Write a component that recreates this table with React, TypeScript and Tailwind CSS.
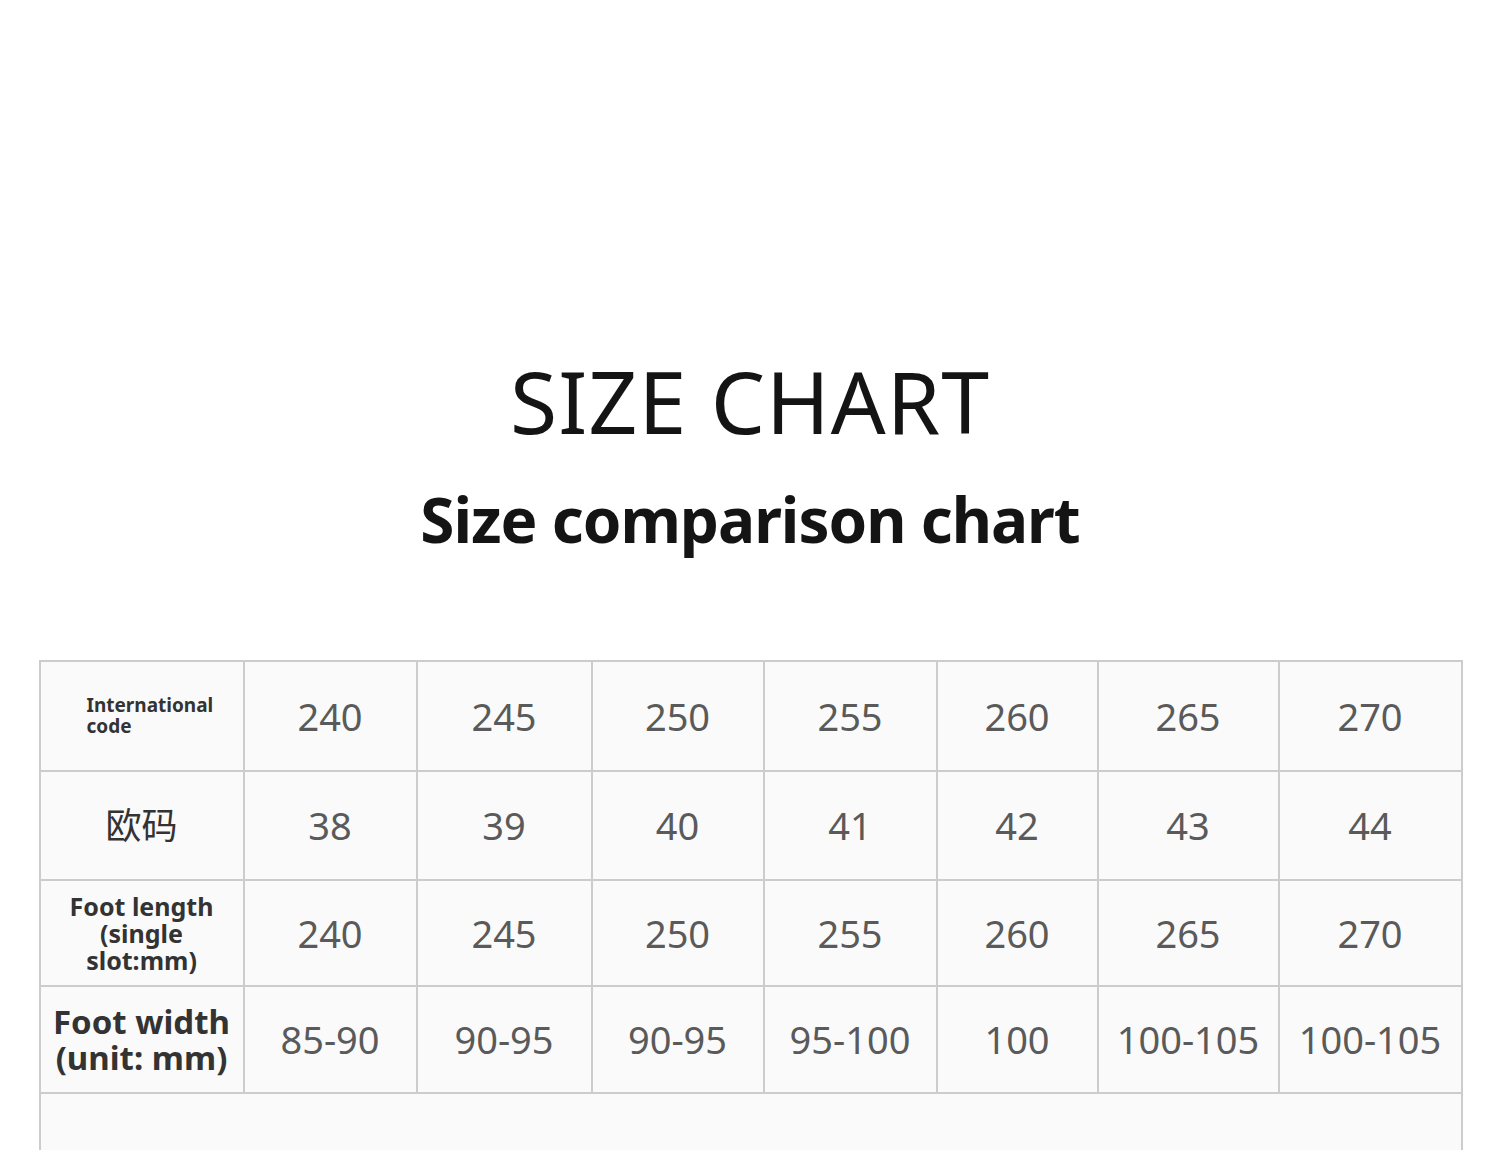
const columns = [
  { w: "w-[173px]", intl: "240", eu: "38", len: "240", width: "85-90" },
  { w: "w-[175px]", intl: "245", eu: "39", len: "245", width: "90-95" },
  { w: "w-[172px]", intl: "250", eu: "40", len: "250", width: "90-95" },
  { w: "w-[173px]", intl: "255", eu: "41", len: "255", width: "95-100" },
  { w: "w-[161px]", intl: "260", eu: "42", len: "260", width: "100" },
  { w: "w-[181px]", intl: "265", eu: "43", len: "265", width: "100-105" },
  { w: "flex-1", intl: "270", eu: "44", len: "270", width: "100-105" },
];

type Key = "intl" | "eu" | "len" | "width";

const rows: { key: Key; h: string; label: React.ReactNode }[] = [
  {
    key: "intl",
    h: "h-[110px]",
    label: (
      <div className="w-full pl-[46px] text-left text-[19px] leading-[21px] font-bold text-[#333]">
        International
        <br />
        code
      </div>
    ),
  },
  {
    key: "eu",
    h: "h-[109px]",
    label: <div className="text-[36px] text-[#333]">欧码</div>,
  },
  {
    key: "len",
    h: "h-[106px]",
    label: (
      <div className="text-center text-[25px] leading-[27px] font-bold text-[#333]">
        Foot length
        <br />
        (single
        <br />
        slot:mm)
      </div>
    ),
  },
  {
    key: "width",
    h: "h-[107px]",
    label: (
      <div className="text-center text-[33px] leading-[36px] font-bold text-[#333]">
        Foot width
        <br />
        (unit: mm)
      </div>
    ),
  },
];

export default function App() {
  return (
    <div
      className="w-[1500px] h-[1150px] overflow-hidden bg-white flex flex-col items-center"
      style={{ fontFamily: '"Noto Sans", "Noto Sans CJK SC", sans-serif' }}
    >
      {/* Titles */}
      <h1 className="mt-[358px] text-[86px] leading-none tracking-[1px] text-[#141414]">SIZE CHART</h1>
      <h2 className="mt-[44px] text-[62px] leading-none font-bold tracking-[-1px] text-[#141414]">
        Size comparison chart
      </h2>

      {/* Table */}
      <div className="mt-[110px] w-[1424px] ml-[1px] border-2 border-[#cccccc] bg-[#fafafa] flex flex-col">
        {rows.map((row) => (
          <div key={row.key} className={`flex ${row.h} border-b-2 border-[#cccccc]`}>
            <div className="w-[204px] flex items-center justify-center border-r-2 border-[#cccccc]">
              {row.label}
            </div>
            {columns.map((c, i) => (
              <div
                key={i}
                className={`${c.w} flex items-center justify-center text-[38px] text-[#5a5a5a] ${
                  i < columns.length - 1 ? "border-r-2 border-[#cccccc]" : ""
                }`}
              >
                {c[row.key]}
              </div>
            ))}
          </div>
        ))}
        <div className="h-[120px]" />
      </div>
    </div>
  );
}
